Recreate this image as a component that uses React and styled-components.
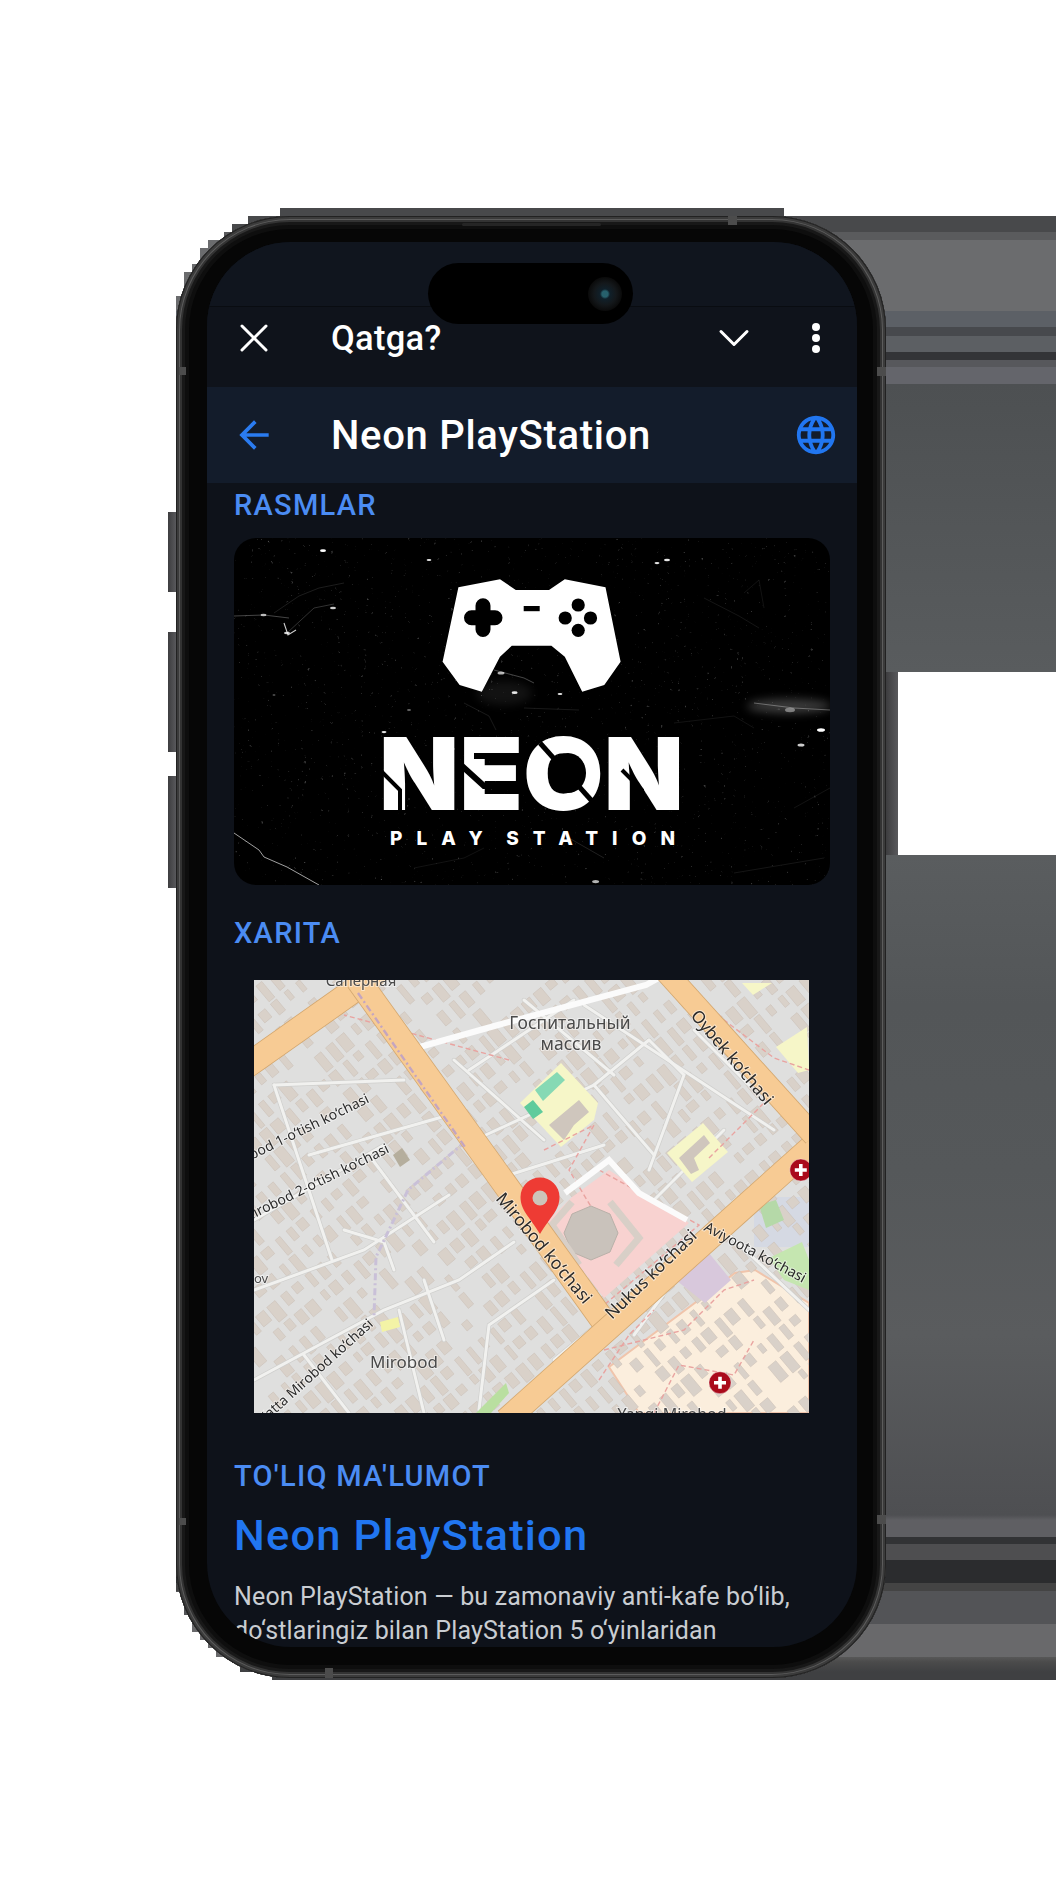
import React from 'react'
import styled, { createGlobalStyle } from 'styled-components'
import { X, ChevronDown } from 'lucide-react'
import { MdArrowBack, MdLanguage } from 'react-icons/md'

const GlobalStyle = createGlobalStyle`
  html, body { margin: 0; padding: 0; background: #fff; }
  body { font-family: Roboto, "Liberation Sans", sans-serif; }
`

const Stage = styled.div`
  position: relative;
  width: 1063px;
  height: 1890px;
  padding: 216px 0 0 176px;
  box-sizing: border-box;
  overflow: hidden;
  background: #fff;
`

// grey leftovers of the mockup cut-out behind the phone
const Backplate = styled.div`
  position: absolute;
  inset: 0;
  clip-path: polygon(
    176px 296px, 184px 296px, 184px 272px, 192px 272px, 192px 264px, 200px 264px, 200px 248px,
    208px 248px, 208px 240px, 224px 240px, 224px 232px, 232px 232px, 232px 224px, 248px 224px,
    248px 216px, 280px 216px, 280px 208px, 784px 208px, 784px 216px, 1056px 216px, 1056px 672px,
    898px 672px, 898px 855px, 1056px 855px, 1056px 1680px, 272px 1680px, 272px 1672px,
    240px 1672px, 240px 1663px, 232px 1663px, 232px 1657px, 216px 1657px, 216px 1648px,
    208px 1648px, 208px 1640px, 200px 1640px, 200px 1632px, 192px 1632px, 192px 1615px,
    184px 1615px, 184px 1592px, 176px 1592px
  );
  background: linear-gradient(180deg,
    #48494b 208px, #48494b 232px, #5a5b5d 232px, #5a5b5d 240px, #6b6c6e 240px, #6b6c6e 311px,
    #5c6066 311px, #5c6066 327px, #47494d 327px, #47494d 336px, #5c5f63 336px, #5c5f63 352px,
    #333437 352px, #333437 360px, #57585c 360px, #57585c 367px, #64656b 367px, #64656b 384px,
    #4d5052 384px, #595c5e 672px, #5a5d5f 855px, #535658 1005px, #55585a 1170px, #5a5c5e 1335px,
    #4e4f52 1515px, #5f5f63 1520px, #5f5f63 1537px, #323335 1537px, #323335 1544px,
    #4e4e50 1544px, #4e4e50 1560px, #2b2c2e 1560px, #2b2c2e 1583px, #444 1583px, #444 1591px,
    #535457 1591px, #535457 1624px, #69696b 1624px, #69696b 1657px, #585858 1657px,
    #4b4b4b 1662px, #3f4042 1672px, #3f4042 1680px
  );
`

const Phone = styled.div`
  position: relative;
  width: 710px;
  height: 1462px;
  padding: 26px 29px 31px 31px;
  box-sizing: border-box;
  border-radius: 114px;
  background: #060606;
  box-shadow:
    inset 0 0 0 1px #222,
    inset 0 0 0 3px #3b3b3b,
    inset 0 0 0 4px #5c5c5c,
    inset 0 0 0 6px #333,
    inset 0 0 0 9px #181818,
    inset 0 0 0 13px #0e0e0e;
`

const SideButton = styled.div`
  position: absolute;
  top: ${p => p.$top}px;
  height: ${p => p.$height}px;
  ${p => (p.$right ? 'right: -12px; width: 12px;' : 'left: -8px; width: 8px;')}
  background: linear-gradient(90deg, #3d3d3f, #59595c);
`

const Band = styled.div`
  position: absolute;
  background: #4c4c4c;
  ${p => p.$place}
`

const Speaker = styled.div`
  position: absolute;
  top: 7px;
  left: 286px;
  width: 139px;
  height: 3px;
  border-radius: 2px;
  background: #252525;
`

const Island = styled.div`
  position: absolute;
  z-index: 2;
  top: 47px;
  left: 252px;
  width: 205px;
  height: 61px;
  border-radius: 31px;
  background: #000;
`

const Camera = styled.div`
  position: absolute;
  top: 14px;
  right: 11px;
  width: 34px;
  height: 34px;
  border-radius: 50%;
  background: radial-gradient(circle at 50% 50%, #27606c 0 3px, #10202a 5px, #14181b 11px, #0a0a0a 17px);
`

const Screen = styled.div`
  width: 650px;
  height: 1405px;
  border-radius: 84px;
  overflow: hidden;
  background: #0e121a;
  display: flex;
  flex-direction: column;
`

const StatusArea = styled.div`
  flex: none;
  height: 65px;
  box-sizing: border-box;
  background: #10151e;
  border-bottom: 1px solid #090c11;
`

const Bar = styled.div`
  flex: none;
  display: flex;
  align-items: center;
  height: ${p => p.$height}px;
  padding-bottom: ${p => p.$lift || 0}px;
  box-sizing: border-box;
  background: ${p => p.$bg};
  color: #fff;
`

const LeadSlot = styled.div`
  flex: none;
  width: 94px;
  margin-right: 30px;
  display: flex;
  justify-content: center;
  color: ${p => p.$color || '#fff'};
`

const TrailSlot = styled.div`
  flex: none;
  width: 82px;
  display: flex;
  justify-content: center;
  color: ${p => p.$color || '#fff'};
`

const Title = styled.div`
  flex: 1;
  font-size: ${p => p.$size}px;
  font-weight: 500;
  letter-spacing: ${p => p.$spacing}px;
  white-space: nowrap;
`

const Dots = styled.div`
  display: flex;
  flex-direction: column;
  gap: 3px;
  span {
    width: 8px;
    height: 8px;
    border-radius: 50%;
    background: #fff;
  }
`

const Content = styled.div`
  padding: 0 27px;
`

const Label = styled.div`
  margin-top: ${p => p.$top}px;
  height: 42px;
  line-height: 44px;
  font-size: 29px;
  font-weight: 500;
  letter-spacing: 1.3px;
  color: #4b8cf3;
  text-transform: uppercase;
`

const LogoCard = styled.div`
  margin-top: 13px;
  height: 347px;
  border-radius: 22px;
  overflow: hidden;
  background: #000;
  svg { display: block; }
`

const MapBox = styled.div`
  width: 555px;
  height: 433px;
  margin: 27px 0 0 20px;
  overflow: hidden;
  background: #dfdfde;
  svg { display: block; filter: blur(0.6px); }
`

const Heading = styled.h2`
  margin: 15px 0 0;
  height: 50px;
  line-height: 50px;
  font-size: 43.4px;
  font-weight: 500;
  letter-spacing: 1.2px;
  color: #2176f0;
`

const Body = styled.p`
  margin: 19px 0 0;
  font-size: 25px;
  line-height: 34px;
  letter-spacing: 0.15px;
  color: #c9cdd2;
`

const SCRATCHES = [
  ['M0 295 L25 312 L30 319 L53 329 L85 347', 0.7, 0.9],
  ['M40 75 L65 58 L85 50 L110 45', 0.16, 0.7],
  ['M53 95 L80 70 L100 66', 0.28, 0.7],
  ['M0 78 L30 77 L55 80', 0.3, 0.9],
  ['M50 85 L54 97 L62 92', 0.8, 1.1],
  ['M470 60 L505 78 L525 90', 0.12, 0.7],
  ['M510 55 L525 42 L530 70', 0.12, 0.6],
  ['M230 165 L255 178 L262 192', 0.14, 0.7],
  ['M290 170 L345 172', 0.14, 0.7],
  ['M520 165 L560 170 L596 172', 0.35, 0.9],
  ['M440 185 L500 178 L520 190', 0.12, 0.6],
  ['M335 300 L370 320', 0.14, 0.9],
  ['M560 270 L596 250', 0.1, 0.7],
  ['M500 335 L560 325 L590 320', 0.12, 0.7],
  ['M180 330 L230 320 L250 310', 0.1, 0.7],
  ['M260 132 L290 140 L300 145', 0.3, 0.9],
]

const SPECKS = [
  [89, 12.7, 3, 1], [195, 22, 2.4, 0.9], [433, 22, 3, 0.9], [423, 25, 2.5, 0.9], [53, 95, 3, 0.8],
  [29.5, 77, 3, 0.7], [99, 70, 3, 0.8], [267, 135, 3.5, 0.7], [280.6, 154.7, 3, 0.9],
  [326, 156, 2.4, 0.9], [587, 192, 4, 1], [567, 207, 3.5, 0.8], [150, 194, 2.5, 0.9],
  [361.6, 343.6, 3.5, 0.7], [556, 172, 5, 0.4], [175, 172, 2, 0.4], [40, 157, 1.5, 0.4],
]

function NeonLogo() {
  return (
    <svg width="596" height="347" viewBox="0 0 596 347">
      <defs>
        <filter id="smudge" x="-30%" y="-100%" width="160%" height="300%">
          <feGaussianBlur stdDeviation="5" />
        </filter>
        <filter id="soft">
          <feGaussianBlur stdDeviation="0.4" />
        </filter>
        <filter id="grain" x="0" y="0" width="100%" height="100%">
          <feTurbulence type="fractalNoise" baseFrequency="0.3" numOctaves="3" seed="7" />
          <feColorMatrix values="0 0 0 0 1  0 0 0 0 1  0 0 0 0 1  3 3 0 0 -4" />
        </filter>
      </defs>
      <rect width="596" height="347" filter="url(#grain)" opacity="0.3" />
      <ellipse cx="555" cy="168" rx="42" ry="7" fill="#fff" opacity="0.24" filter="url(#smudge)" />
      <ellipse cx="270" cy="155" rx="28" ry="12" fill="#fff" opacity="0.07" filter="url(#smudge)" />
      <g filter="url(#soft)">
        {SCRATCHES.map(([d, o, w], i) => (
          <path key={i} d={d} fill="none" stroke="#fff" strokeOpacity={o} strokeWidth={w} />
        ))}
        {SPECKS.map(([x, y, r, o], i) => (
          <ellipse key={i} cx={x} cy={y} rx={r} ry={r * 0.45} fill="#fff" opacity={o} />
        ))}
      </g>

      <polygon
        fill="#fff"
        points="224.4,49.3 266,41.3 281.8,52 315,52 330.8,41.3 371.5,49.3 386.6,123.7 370.3,147 348.2,153.7 330.8,118.7 317.4,107.7 277.8,107.7 266,118.7 247.8,153.7 225.6,147 208.6,123.7"
      />
      <path d="M237.5 79.7H261M249 67.8V91.5" stroke="#000" strokeWidth="15" strokeLinecap="round" />
      <rect x="289.7" y="68" width="16" height="5.2" fill="#000" />
      <circle cx="344.2" cy="67" r="6.6" fill="#000" />
      <circle cx="331.2" cy="80" r="6.6" fill="#000" />
      <circle cx="356.5" cy="80" r="6.6" fill="#000" />
      <circle cx="344.2" cy="92.3" r="6.6" fill="#000" />

      <text
        x="145"
        y="272"
        textLength="305"
        lengthAdjust="spacingAndGlyphs"
        fontFamily="Inter, Roboto, sans-serif"
        fontWeight="900"
        fontSize="101"
        fill="#fff"
      >
        NEON
      </text>
      {/* stencil cuts over the wordmark */}
      <ellipse cx="334" cy="235" rx="18" ry="20" fill="#000" />
      <g fill="none" stroke="#000">
        <path d="M146 232 L166 252 L166 274" strokeWidth="4" />
        <path d="M228 228 L250 248 L290 248" strokeWidth="6" />
        <path d="M240 218 L295 218" strokeWidth="6" />
        <path d="M306 205 L366 272" strokeWidth="5" />
        <path d="M388 232 L408 252 L408 274" strokeWidth="4" />
      </g>
      <text
        x="156"
        y="307"
        textLength="285"
        lengthAdjust="spacing"
        wordSpacing="-9"
        fontFamily="Inter, Roboto, sans-serif"
        fontWeight="800"
        fontSize="19"
        fill="#fff"
      >
        PLAY STATION
      </text>
    </svg>
  )
}

// small seeded generator, the city blocks are too many to list by hand
function rng(seed) {
  let a = seed
  return () => {
    a = (a + 0x6d2b79f5) | 0
    let t = Math.imul(a ^ (a >>> 15), 1 | a)
    t = (t + Math.imul(t ^ (t >>> 7), 61 | t)) ^ t
    return ((t ^ (t >>> 14)) >>> 0) / 4294967296
  }
}

function makeBuildings() {
  const rand = rng(41)
  const list = []
  const cos = Math.cos((50 * Math.PI) / 180)
  const sin = Math.sin((50 * Math.PI) / 180)
  for (let u = -500; u < 800; u += 23) {
    for (let v = -500; v < 600; v += 15) {
      const x = u * cos - v * sin
      const y = u * sin + v * cos
      if (x < -20 || x > 575 || y < -20 || y > 453) continue
      if (rand() < 0.16) continue
      list.push({ x, y, w: 8 + rand() * 13, h: 5 + rand() * 6 })
    }
  }
  return list
}

const BUILDINGS = makeBuildings()

const STREETS = [
  'M20 105 L78 280',
  'M20 105 L150 100',
  'M0 310 L110 270 L195 215',
  'M55 175 L195 135',
  'M0 400 L130 330 L205 300 L260 262',
  'M115 175 L180 262',
  'M0 240 L130 165',
  'M170 300 L190 360',
  'M90 250 L130 262 L140 290',
  'M225 430 L235 345 L300 300',
  'M145 330 L170 433',
  'M50 375 L95 433',
  'M200 80 L290 160',
  'M210 165 L340 105 L395 60',
  'M255 195 L350 165',
  'M340 105 L400 175',
  'M395 60 L430 95 L395 190',
  'M330 25 L520 150',
  'M440 50 L495 105',
  'M390 230 L470 150',
  'M470 250 L555 330',
  'M380 355 L420 300',
  'M300 380 L355 335',
  'M215 90 L320 20',
  'M270 20 L360 95',
]

const DASHED = [
  'M118 0 L97 8 M430 0 L470 40 L520 78 L555 90',
  'M455 178 L515 118 L555 145',
  'M290 170 L340 145 L315 190 L345 240',
  'M345 190 L445 245 L350 325 L300 262',
  'M345 400 L375 355 L400 330',
  'M350 370 L430 350 L470 310 L500 300',
  'M400 433 L425 385 L480 395 L500 360',
  'M255 80 L90 35',
]

const TEXT_HALO = { paintOrder: 'stroke', stroke: 'rgba(255,255,255,0.5)', strokeWidth: 2 }

const LABELS = [
  { t: 'Саперная', x: 107, y: 6, s: 15, anchor: 'middle' },
  { t: 'Госпитальный', x: 316, y: 49, s: 17.5, anchor: 'middle' },
  { t: 'массив', x: 317, y: 70, s: 17.5, anchor: 'middle' },
  { t: 'Oybek ko‘chasi', x: 436, y: 36, s: 17, r: 50 },
  { t: 'Mirobod ko‘chasi', x: 241, y: 219, s: 17.5, r: 50 },
  { t: 'Nukus ko‘chasi', x: 358, y: 340, s: 17.3, r: -44 },
  { t: 'Aviyoota ko‘chasi', x: 449, y: 250, s: 14.2, r: 28 },
  { t: 'Mirobod 1-o‘tish ko‘chasi', x: 116, y: 122, s: 14, r: -26, anchor: 'end' },
  { t: 'Mirobod 2-o‘tish ko‘chasi', x: 136, y: 172, s: 14, r: -26, anchor: 'end' },
  { t: 'Katta Mirobod ko‘chasi', x: 120, y: 345, s: 14, r: -42, anchor: 'end' },
  { t: 'Mirobod', x: 150, y: 388, s: 17, anchor: 'middle' },
  { t: 'ov', x: 0, y: 303, s: 13 },
  { t: 'Yangi Mirobod', x: 418, y: 440, s: 16, anchor: 'middle' },
]

function Road({ d, w }) {
  return (
    <>
      <path d={d} fill="none" stroke="#d3a76f" strokeWidth={w + 1.6} />
      <path d={d} fill="none" stroke="#f7cb94" strokeWidth={w} />
    </>
  )
}

function Hospital({ x, y }) {
  return (
    <g>
      <circle cx={x} cy={y} r="11" fill="#aa0a1b" stroke="#fff" strokeOpacity="0.4" />
      <path d={`M${x - 6} ${y}H${x + 6}M${x} ${y - 6}V${y + 6}`} stroke="#fff" strokeWidth="3.6" />
    </g>
  )
}

function MapPicture() {
  return (
    <svg width="555" height="433" viewBox="0 0 555 433" fontFamily='"Noto Sans", "Open Sans", sans-serif'>
      <rect width="555" height="433" fill="#dfdfde" />
      <polygon points="500,217 555,217 555,267 500,267" fill="#d5d9e3" />
      <polygon points="355,387 481,293 501,290 555,323 555,433 385,433" fill="#fbeedd" stroke="#f0c4ab" strokeWidth="2" />

      {BUILDINGS.map((b, i) => (
        <rect
          key={i}
          x={b.x}
          y={b.y}
          width={b.w}
          height={b.h}
          transform={`rotate(50 ${b.x} ${b.y})`}
          fill="#d9d1c9"
          stroke="#c9bfb6"
          strokeWidth="0.5"
        />
      ))}

      <g fill="none" strokeLinecap="round">
        {STREETS.map((d, i) => (
          <path key={i} d={d} stroke="#cfcfcd" strokeWidth="4.4" />
        ))}
        {STREETS.map((d, i) => (
          <path key={i} d={d} stroke="#f1f1ef" strokeWidth="3" />
        ))}
      </g>

      {/* land use patches and their own buildings, over the grid */}
      <polygon points="355,190 435,243 350,318 292,243 318,217" fill="#f8d2d0" />
      <polygon points="307,83 344,123 340,140 307,167 266,123" fill="#f6f6c8" />
      <polygon points="413,173 449,143 474,172 438,202" fill="#f6f6c8" />
      <polygon points="522,67 553,47 555,90 544,93" fill="#f6f6c8" />
      <polygon points="488,3 518,3 499,15" fill="#f6f6c8" />
      <polygon points="418,297 450,267 477,300 451,323" fill="#d8c8dc" />
      <polygon points="222,433 252,403 255,413 237,433" fill="#b9dfa0" />
      <polygon points="515,278 548,262 555,280 555,310 530,300" fill="#c5e6b0" />
      <polygon points="505,225 522,220 530,240 512,248" fill="#b5d9a8" />
      <polygon points="281,110 303,92 311,100 289,121" fill="#86d9b4" />
      <polygon points="270,127 279,120 289,132 279,139" fill="#5fcb9c" />
      <polygon points="139,175 148,168 156,180 146,187" fill="#b5ae9d" />
      <polygon points="126,342 144,337 146,347 128,352" fill="#f3f3a6" />
      <path d="M295 145 L325 120 L335 132 L320 145 L310 160 Z" fill="#cfc6bd" />
      <path d="M425 178 L450 155 L456 163 L440 178 L445 190 L437 194 Z" fill="#cfc6bd" />

      <g fill="none" stroke="#e9a3a0" strokeWidth="1.4" strokeDasharray="5 3">
        {DASHED.map((d, i) => (
          <path key={i} d={d} />
        ))}
      </g>

      <path d="M155 70 L244 45 L392 5 L410 -5" fill="none" stroke="#fbfbfb" strokeWidth="6" />
      <path d="M311 213 L355 180 L385 213 L433 240" fill="none" stroke="#fbfbfb" strokeWidth="6" />
      <path d="M211 162 L154 210 L122 277 L120 337" fill="none" stroke="#c9c0d8" strokeWidth="3" strokeDasharray="7 3 2 3" />

      <polygon points="337,226 356,234 364,253 356,272 337,280 318,272 310,253 318,234" fill="#c9c2bb" stroke="#b9b1a9" />
      <path d="M318 222 L298 245 L325 285 M356 222 L385 258 L362 285" fill="none" stroke="#d8cfc7" strokeWidth="7" />

      <Road d="M-10 88 L96 13 L125 -10" w={24} />
      <Road d="M104 0 L350 342" w={24} />
      <Road d="M565 160 L252 440" w={23} />
      <Road d="M412 -8 L560 156" w={21} />
      <path d="M104 13 L211 167" fill="none" stroke="#c4a5c0" strokeWidth="2.4" strokeDasharray="7 3 2 3" />

      {LABELS.map(({ t, x, y, s, r, anchor }) => (
        <text
          key={t}
          x={x}
          y={y}
          fontSize={s}
          fill={r ? '#2b2b2b' : '#4a4a4a'}
          textAnchor={anchor || 'start'}
          transform={r ? `rotate(${r} ${x} ${y})` : undefined}
          style={TEXT_HALO}
        >
          {t}
        </text>
      ))}

      <Hospital x={546.8} y={190} />
      <Hospital x={466} y={402.7} />

      <path
        d="M286 254 C275 236 266.5 230 266.5 217 A19.5 19.5 0 0 1 305.5 217 C305.5 230 297 236 286 254 Z"
        fill="#ee3b34"
      />
      <circle cx="286" cy="218" r="7.5" fill="#cdc4ba" />
    </svg>
  )
}

export default function App() {
  return (
    <Stage>
      <GlobalStyle />
      <Backplate />
      <Phone>
        <SideButton $top={296} $height={80} />
        <SideButton $top={416} $height={120} />
        <SideButton $top={560} $height={112} />
        <SideButton $right $top={456} $height={183} />
        <Band $place="left: 3px; top: 151px; width: 7px; height: 8px;" />
        <Band $place="right: 0; top: 151px; width: 9px; height: 9px;" />
        <Band $place="left: 3px; top: 1302px; width: 7px; height: 7px;" />
        <Band $place="right: 0; top: 1299px; width: 9px; height: 9px;" />
        <Band $place="left: 149px; bottom: 0; width: 8px; height: 10px;" />
        <Band $place="left: 552px; top: 0; width: 9px; height: 9px;" />
        <Speaker />
        <Island>
          <Camera />
        </Island>
        <Screen>
          <StatusArea />
          <Bar $height={80} $lift={18} $bg="#0f131b">
            <LeadSlot>
              <X size={48} strokeWidth={1.5} />
            </LeadSlot>
            <Title $size={34.5} $spacing={0.3}>Qatga?</Title>
            <TrailSlot>
              <ChevronDown size={52} strokeWidth={1.4} />
            </TrailSlot>
            <TrailSlot>
              <Dots><span /><span /><span /></Dots>
            </TrailSlot>
          </Bar>
          <Bar $height={96} $bg="#131c2b">
            <LeadSlot $color="#2a7bf0">
              <MdArrowBack size={44} />
            </LeadSlot>
            <Title $size={40} $spacing={0.7}>Neon PlayStation</Title>
            <TrailSlot $color="#2176f0">
              <MdLanguage size={46} />
            </TrailSlot>
          </Bar>
          <Content>
            <Label $top={0}>Rasmlar</Label>
            <LogoCard>
              <NeonLogo />
            </LogoCard>
            <Label $top={26}>Xarita</Label>
            <MapBox>
              <MapPicture />
            </MapBox>
            <Label $top={41}>To'liq ma'lumot</Label>
            <Heading>Neon PlayStation</Heading>
            <Body>
              Neon PlayStation — bu zamonaviy anti-kafe bo‘lib, do‘stlaringiz bilan PlayStation 5 o‘yinlaridan
              zavqlanishingiz mumkin bo‘lgan joy.
            </Body>
          </Content>
        </Screen>
      </Phone>
    </Stage>
  )
}
